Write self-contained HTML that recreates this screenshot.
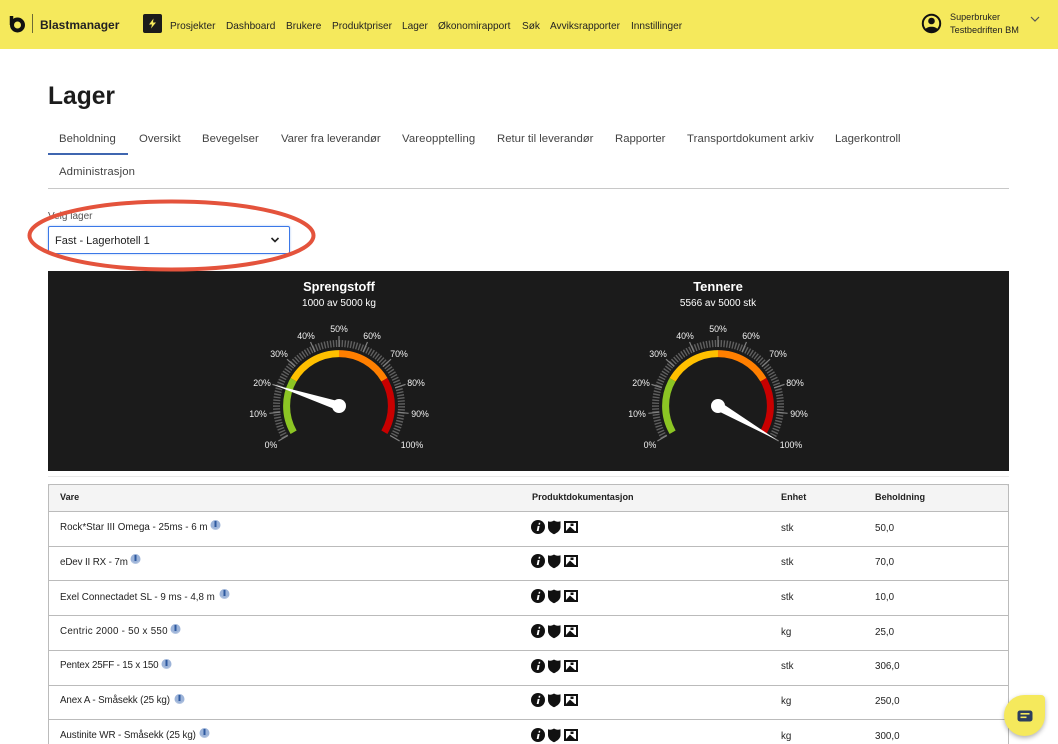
<!DOCTYPE html>
<html lang="no">
<head>
<meta charset="utf-8">
<title>Lager</title>
<style>
html,body{margin:0;padding:0;background:#fff}
body{position:relative;width:1058px;height:744px;overflow:hidden;font-family:"Liberation Sans",sans-serif;color:#1c1c1c}
.t{position:absolute;white-space:nowrap;line-height:14px}
.nav{top:20px;font-size:10.1px;color:#222}
.tab{font-size:11.35px;color:#444}
.box{position:absolute}
.c{font-size:9.8px;color:#222}
.h{font-size:9.1px;font-weight:bold;color:#222}
.row{position:absolute;left:48px;width:961px;height:1px;background:#bbb}
svg text{font-family:"Liberation Sans",sans-serif}
</style>
</head>
<body>
<div class="box" style="left:0;top:0;width:1058px;height:49px;background:#f5e95c"></div>
<svg class="box" style="left:8px;top:13px" width="20" height="22" viewBox="0 0 20 22">
<circle cx="9.5" cy="12" r="5.5" fill="none" stroke="#111" stroke-width="4"/>
<path d="M3.5 3V12" stroke="#111" stroke-width="3.5" fill="none"/>
<circle cx="9.5" cy="12" r="1.6" fill="#f5e95c"/>
</svg>
<div class="box" style="left:32px;top:14px;width:1px;height:19px;background:#6d6a35"></div>
<div class="t" style="left:40px;top:18px;font-size:12px;font-weight:bold;color:#222">Blastmanager</div>
<div class="box" style="left:143px;top:14px;width:19px;height:19px;background:#1b1b1b;border-radius:2px"></div>
<svg class="box" style="left:143px;top:14px" width="19" height="19" viewBox="0 0 19 19"><path d="M10.5 4.5L6 10.500H9L8 14.500L13 8.500H10Z" fill="#f5e95c"/></svg>
<div class="t nav" style="left:170px">Prosjekter</div>
<div class="t nav" style="left:226px">Dashboard</div>
<div class="t nav" style="left:286px">Brukere</div>
<div class="t nav" style="left:332px">Produktpriser</div>
<div class="t nav" style="left:402px">Lager</div>
<div class="t nav" style="left:438px">Økonomirapport</div>
<div class="t nav" style="left:522px">Søk</div>
<div class="t nav" style="left:550px">Avviksrapporter</div>
<div class="t nav" style="left:631px">Innstillinger</div>
<svg class="box" style="left:921px;top:13px" width="21" height="21" viewBox="0 0 21 21">
<circle cx="10.500" cy="10.500" r="8.700" fill="none" stroke="#111" stroke-width="2"/>
<circle cx="10.500" cy="8" r="3.300" fill="#111"/>
<path d="M4.500 16.500C5.500 12.800 15.500 12.800 16.500 16.500C13 19.500 8 19.500 4.500 16.500Z" fill="#111"/>
</svg>
<div class="t" style="left:950px;top:10px;font-size:9.1px;color:#222">Superbruker</div>
<div class="t" style="left:950px;top:23px;font-size:9.2px;color:#222">Testbedriften BM</div>
<svg class="box" style="left:1029px;top:14px" width="12" height="10" viewBox="0 0 12 10"><path d="M2 3L6 7L10 3" fill="none" stroke="#555" stroke-width="1.200"/></svg>

<div class="t" style="left:48px;top:82px;font-size:24.6px;line-height:30px;font-weight:bold;color:#1c1c1c">Lager</div>

<div class="t tab" style="left:59px;top:132px">Beholdning</div>
<div class="t tab" style="left:139px;top:132px">Oversikt</div>
<div class="t tab" style="left:202px;top:132px">Bevegelser</div>
<div class="t tab" style="left:281px;top:132px;letter-spacing:-.05px">Varer fra leverandør</div>
<div class="t tab" style="left:402px;top:132px;letter-spacing:.12px">Vareopptelling</div>
<div class="t tab" style="left:497px;top:132px">Retur til leverandør</div>
<div class="t tab" style="left:615px;top:132px">Rapporter</div>
<div class="t tab" style="left:687px;top:132px;letter-spacing:.08px">Transportdokument arkiv</div>
<div class="t tab" style="left:835px;top:132px">Lagerkontroll</div>
<div class="t tab" style="left:59px;top:165px;letter-spacing:.12px">Administrasjon</div>
<div class="box" style="left:48px;top:153px;width:80px;height:2px;background:#3f66b0"></div>
<div class="box" style="left:48px;top:188px;width:961px;height:1px;background:#c8c8c8"></div>

<div class="t" style="left:48px;top:210px;font-size:10px;color:#555">Velg lager</div>
<div class="box" style="left:48px;top:226px;width:240px;height:26px;border:1px solid #3b78e7;border-radius:2px;box-shadow:0 0 2px #a9c5f5;background:#fff"></div>
<div class="t" style="left:55px;top:234px;font-size:11px;color:#222">Fast - Lagerhotell 1</div>
<svg class="box" style="left:269px;top:235px" width="12" height="10" viewBox="0 0 12 10"><path d="M2.500 3L6 6.500L9.500 3" fill="none" stroke="#222" stroke-width="1.600"/></svg>

<div class="box" style="left:48px;top:271px;width:961px;height:200px;background:#1b1b1b"></div>
<div class="box" style="left:48px;top:476px;width:961px;height:1px;background:#e8e8e8"></div>

<svg class="box" style="left:0;top:271px" width="1058" height="200" viewBox="0 271 1058 200">
<defs>
<g id="g">
<path d="M-54.100 31.250A62.500 62.500 0 1 1 54.100 31.250" fill="none" stroke="#5f5f5f" stroke-width="7" stroke-dasharray="1.400 1.500"/>
<g stroke="#808080" stroke-width="1.200">
<line y1="-59" y2="-70" transform="rotate(-120)"/>
<line y1="-59" y2="-70" transform="rotate(-96)"/>
<line y1="-59" y2="-70" transform="rotate(-72)"/>
<line y1="-59" y2="-70" transform="rotate(-48)"/>
<line y1="-59" y2="-70" transform="rotate(-24)"/>
<line y1="-59" y2="-70"/>
<line y1="-59" y2="-70" transform="rotate(24)"/>
<line y1="-59" y2="-70" transform="rotate(48)"/>
<line y1="-59" y2="-70" transform="rotate(72)"/>
<line y1="-59" y2="-70" transform="rotate(96)"/>
<line y1="-59" y2="-70" transform="rotate(120)"/>
</g>
<g fill="none" stroke-width="7">
<path d="M-45.400 26.200A52.400 52.400 0 0 1 -45.400 -26.200" stroke="#8cc524"/>
<path d="M-45.400 -26.200A52.400 52.400 0 0 1 0 -52.400" stroke="#ffc000"/>
<path d="M0 -52.400A52.400 52.400 0 0 1 45.400 -26.200" stroke="#ff7f00"/>
<path d="M45.400 -26.200A52.400 52.400 0 0 1 45.400 26.200" stroke="#c80000"/>
</g>
</g>
</defs>
<use href="#g" x="339" y="406"/>
<use href="#g" x="718" y="406"/>
<g transform="translate(339 406) rotate(-72)" fill="#fff"><path d="M-4.500 0L0 -69L4.500 0Z"/></g>
<circle cx="339" cy="406" r="7" fill="#fff"/>
<g transform="translate(718 406) rotate(120)" fill="#fff"><path d="M-4.500 0L0 -68L4.500 0Z"/></g>
<circle cx="718" cy="406" r="7" fill="#fff"/>
<g fill="#f0f0f0" font-size="8.800" text-anchor="middle">
<text x="271" y="448">0%</text><text x="258" y="417">10%</text><text x="262" y="386">20%</text><text x="279" y="357">30%</text><text x="306" y="339">40%</text><text x="339" y="332">50%</text><text x="372" y="339">60%</text><text x="399" y="357">70%</text><text x="416" y="386">80%</text><text x="420" y="417">90%</text><text x="412" y="448">100%</text>
<text x="650" y="448">0%</text><text x="637" y="417">10%</text><text x="641" y="386">20%</text><text x="658" y="357">30%</text><text x="685" y="339">40%</text><text x="718" y="332">50%</text><text x="751" y="339">60%</text><text x="778" y="357">70%</text><text x="795" y="386">80%</text><text x="799" y="417">90%</text><text x="791" y="448">100%</text>
</g>
<g fill="#fff" text-anchor="middle">
<text x="339" y="291" font-size="12.800" font-weight="bold">Sprengstoff</text>
<text x="339" y="306" font-size="10">1000 av 5000 kg</text>
<text x="718" y="291" font-size="13" font-weight="bold">Tennere</text>
<text x="718" y="306" font-size="10">5566 av 5000 stk</text>
</g>
</svg>

<svg class="box" style="left:0;top:190px;pointer-events:none;z-index:5" width="340" height="95" viewBox="0 190 340 95">
<ellipse cx="171.500" cy="235.500" rx="142" ry="34" fill="none" stroke="#e4533c" stroke-width="4"/>
</svg>

<div class="box" style="left:48px;top:484px;width:959px;height:27px;border:1px solid #bbb;border-bottom:0;background:#f4f4f4;border-radius:2px 2px 0 0"></div>
<div class="box" style="left:48px;top:484px;width:1px;height:260px;background:#bbb"></div>
<div class="box" style="left:1008px;top:484px;width:1px;height:260px;background:#bbb"></div>
<div class="row" style="top:511px"></div>
<div class="row" style="top:546px"></div>
<div class="row" style="top:580px"></div>
<div class="row" style="top:615px"></div>
<div class="row" style="top:650px"></div>
<div class="row" style="top:685px"></div>
<div class="row" style="top:719px"></div>

<div class="t h" style="left:60px;top:490px">Vare</div>
<div class="t h" style="left:532px;top:490px">Produktdokumentasjon</div>
<div class="t h" style="left:781px;top:490px">Enhet</div>
<div class="t h" style="left:875px;top:490px">Beholdning</div>

<svg width="0" height="0" style="position:absolute"><defs>
<g id="d">
<circle cx="7" cy="7" r="7" fill="#111"/>
<path d="M7.800 2.800h1.500l-.3 1.800h-1.500zM6.700 6h1.900l-1 5h-1.900z" fill="#fff"/>
<path d="M17 1.200C19 2.200 21 1.800 23 .500C25 1.800 27 2.200 29.500 1.200V7C29.500 10.500 26 13 23 14.200C20 13 17 10.500 17 7Z" fill="#111"/>
<rect x="33" y="1" width="14" height="12" fill="#111"/>
<rect x="35" y="3" width="10" height="8" fill="#fff"/>
<path d="M35 11L39 6.500L44 11Z" fill="#111"/><rect x="39.500" y="3.500" width="3" height="2.500" fill="#111"/>
</g>
<g id="i">
<circle cx="5.500" cy="5" r="5" fill="#9cb3d8"/>
<path d="M5.500 1V7" stroke="#2e5aa0" stroke-width="2"/>
<path d="M2 7.500C3 10 8 10 9 7.500" fill="none" stroke="#b9c9e2" stroke-width="1"/>
</g>
</defs></svg>

<div class="t c" style="left:60px;top:521px">Rock*Star III Omega - 25ms - 6 m</div>
<svg class="box" style="left:210px;top:520px" width="11" height="11"><use href="#i"/></svg>
<svg class="box" style="left:531px;top:520px" width="48" height="15"><use href="#d"/></svg>
<div class="t c" style="left:781px;top:522px">stk</div><div class="t c" style="left:875px;top:522px">50,0</div>

<div class="t c" style="left:60px;top:556px;letter-spacing:-.13px">eDev II RX - 7m</div>
<svg class="box" style="left:130px;top:554px" width="11" height="11"><use href="#i"/></svg>
<svg class="box" style="left:531px;top:554px" width="48" height="15"><use href="#d"/></svg>
<div class="t c" style="left:781px;top:556px">stk</div><div class="t c" style="left:875px;top:556px">70,0</div>

<div class="t c" style="left:60px;top:591px">Exel Connectadet SL - 9 ms - 4,8 m</div>
<svg class="box" style="left:219px;top:589px" width="11" height="11"><use href="#i"/></svg>
<svg class="box" style="left:531px;top:589px" width="48" height="15"><use href="#d"/></svg>
<div class="t c" style="left:781px;top:591px">stk</div><div class="t c" style="left:875px;top:591px">10,0</div>

<div class="t c" style="left:60px;top:625px;letter-spacing:.26px">Centric 2000 - 50 x 550</div>
<svg class="box" style="left:170px;top:624px" width="11" height="11"><use href="#i"/></svg>
<svg class="box" style="left:531px;top:624px" width="48" height="15"><use href="#d"/></svg>
<div class="t c" style="left:781px;top:626px">kg</div><div class="t c" style="left:875px;top:626px">25,0</div>

<div class="t c" style="left:60px;top:659px;letter-spacing:-.18px">Pentex 25FF - 15 x 150</div>
<svg class="box" style="left:161px;top:659px" width="11" height="11"><use href="#i"/></svg>
<svg class="box" style="left:531px;top:659px" width="48" height="15"><use href="#d"/></svg>
<div class="t c" style="left:781px;top:660px">stk</div><div class="t c" style="left:875px;top:660px">306,0</div>

<div class="t c" style="left:60px;top:694px;letter-spacing:-.12px">Anex A - Småsekk (25 kg)</div>
<svg class="box" style="left:174px;top:694px" width="11" height="11"><use href="#i"/></svg>
<svg class="box" style="left:531px;top:693px" width="48" height="15"><use href="#d"/></svg>
<div class="t c" style="left:781px;top:695px">kg</div><div class="t c" style="left:875px;top:695px">250,0</div>

<div class="t c" style="left:60px;top:729px;letter-spacing:-.1px">Austinite WR - Småsekk (25 kg)</div>
<svg class="box" style="left:199px;top:728px" width="11" height="11"><use href="#i"/></svg>
<svg class="box" style="left:531px;top:728px" width="48" height="15"><use href="#d"/></svg>
<div class="t c" style="left:781px;top:730px">kg</div><div class="t c" style="left:875px;top:730px">300,0</div>

<div class="box" style="left:1004px;top:695px;width:41px;height:41px;background:#f5e95c;border-radius:21px 4px 21px 21px;box-shadow:0 2px 5px rgba(0,0,0,.3);z-index:6"></div>
<svg class="box" style="left:1017px;top:710px;z-index:7" width="16" height="12" viewBox="0 0 16 12">
<rect x=".5" y=".5" width="15" height="11" rx="2.500" fill="#2c3e5e"/>
<rect x="3.500" y="3" width="9" height="1.600" fill="#f5e95c"/><rect x="3.500" y="6.500" width="6" height="1.600" fill="#f5e95c"/>
</svg>
</body>
</html>
